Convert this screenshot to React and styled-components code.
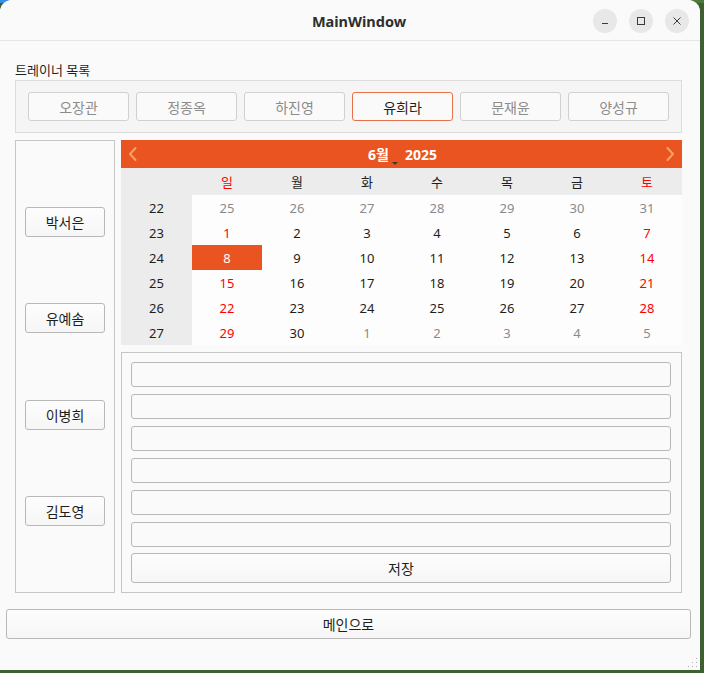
import React, { useState } from 'react';
import styled, { createGlobalStyle } from 'styled-components';

const GlobalStyle = createGlobalStyle`
  html, body {
    margin: 0;
    padding: 0;
    background: linear-gradient(to bottom, #3b8ee6 0px, #3b8ee6 3px, #46743a 3px);
    font-family: "Noto Sans", "Noto Sans CJK KR", sans-serif;
    overflow: hidden;
  }
  * { box-sizing: border-box; }
`;

const Desktop = styled.div`
  width: 704px;
  height: 673px;
  background: linear-gradient(to right, #3b8ee6 0%, #3b8ee6 82%, #4d7a3c 92%);
  background-size: 100% 3px;
  background-repeat: no-repeat;
  background-color: #3d5f31;
`;

const Window = styled.div`
  position: relative;
  width: 700px;
  height: 670px;
  background: #fafafa;
  border-radius: 12px 12px 0 0;
  display: flex;
  flex-direction: column;
  overflow: hidden;
`;

const TitleBar = styled.div`
  height: 41px;
  flex: none;
  display: flex;
  align-items: center;
  justify-content: center;
  position: relative;
  padding: 2px 0 0 18px;
  border-bottom: 1px solid #e6e6e6;
  background: #fafafa;
`;

const Title = styled.div`
  font-family: "Noto Sans", "DejaVu Sans", sans-serif;
  font-weight: 700;
  font-size: 14.5px;
  color: #2e2e2e;
`;

const WinButtons = styled.div`
  position: absolute;
  right: 11px;
  top: 9px;
  display: flex;
  gap: 12px;
`;

const WinButton = styled.div`
  width: 24px;
  height: 24px;
  border-radius: 50%;
  background: #e8e8e8;
  display: flex;
  align-items: center;
  justify-content: center;
`;

const Content = styled.div`
  flex: 1;
  display: flex;
  flex-direction: column;
  padding: 0 9px 0 6px;
`;

const Upper = styled.div`
  padding: 0 9px;
  display: flex;
  flex-direction: column;
`;

const SectionLabel = styled.div`
  font-size: 13px;
  color: #1e1e1e;
  margin-top: 20px;
  height: 19px;
  line-height: 19px;
`;

const GroupBox = styled.div`
  border: 1px solid #dcdcdc;
  background: #f5f5f5;
  height: 53px;
  padding: 11px 12px 0 12px;
  display: flex;
  gap: 7px;
`;

const TrainerButton = styled.button`
  flex: 1;
  height: 29px;
  font-family: "Noto Sans", "Noto Sans CJK KR", sans-serif;
  font-size: 14px;
  color: ${p => (p.$active ? '#1e1e1e' : '#8c8c8c')};
  background: #fafafa;
  border: 1px solid ${p => (p.$active ? '#e9714a' : '#d0d0d0')};
  border-radius: 3px;
  padding: 0;
`;

const MainRow = styled.div`
  margin-top: 7px;
  display: flex;
  gap: 6px;
  height: 453px;
`;

const LeftPanel = styled.div`
  width: 100px;
  border: 1px solid #c6c6c6;
  display: flex;
  flex-direction: column;
  justify-content: space-evenly;
  align-items: center;
`;

const PushButton = styled.button`
  width: ${p => p.$width || '80px'};
  height: ${p => p.$height || '30px'};
  font-family: "Noto Sans", "Noto Sans CJK KR", sans-serif;
  font-size: 14px;
  color: #1e1e1e;
  background: linear-gradient(#fdfdfd, #f6f6f6);
  border: 1px solid #b8b8b8;
  border-radius: 3px;
  padding: 0;
`;

const RightColumn = styled.div`
  flex: 1;
  display: flex;
  flex-direction: column;
  gap: 7px;
`;

const Calendar = styled.div`
  height: 205px;
  display: flex;
  flex-direction: column;
  background: #fdfdfd;
`;

const CalHeader = styled.div`
  height: 28px;
  background: #e95420;
  display: flex;
  align-items: center;
  justify-content: space-between;
  padding: 0 6px 0 6px;
`;

const MonthYear = styled.div`
  display: flex;
  align-items: center;
  gap: 12px;
  color: #ffffff;
  font-weight: 700;
  font-size: 14px;
  margin-left: 2px;
`;

const MonthLabel = styled.span`
  position: relative;
  padding-right: 4px;
`;

const DropArrow = styled.span`
  position: absolute;
  right: -5px;
  bottom: -1px;
  width: 0;
  height: 0;
  border-left: 3px solid transparent;
  border-right: 3px solid transparent;
  border-top: 3px solid #3a3a3a;
`;

const CalGrid = styled.div`
  flex: 1;
  display: grid;
  grid-template-columns: 71px repeat(7, 1fr);
  grid-template-rows: 27px repeat(6, 25px);
  font-size: 13px;
`;

const Cell = styled.div`
  display: flex;
  align-items: center;
  justify-content: center;
  background: ${p => (p.$selected ? '#e95420' : p.$head ? '#ececec' : 'transparent')};
  color: ${p =>
    p.$selected ? '#ffffff' : p.$dim ? '#8a8a8a' : p.$red ? '#ff0000' : '#1e1e1e'};
`;

const FormBox = styled.div`
  flex: 1;
  border: 1px solid #c6c6c6;
  padding: 9px 10px 0 9px;
  display: flex;
  flex-direction: column;
  gap: 7px;
`;

const FieldInput = styled.input`
  height: 25px;
  border: 1px solid #b8b8b8;
  border-radius: 3px;
  background: #fafafa;
  font-family: "Noto Sans", "Noto Sans CJK KR", sans-serif;
  font-size: 13px;
  padding: 0 6px;
  outline: none;
`;

const BottomRow = styled.div`
  margin-top: 16px;
  display: flex;
`;

const Grip = styled.svg`
  position: absolute;
  right: 2px;
  bottom: 2px;
`;

const trainers = ['오장관', '정종옥', '하진영', '유희라', '문재윤', '양성규'];
const members = ['박서은', '유예솜', '이병희', '김도영'];
const dows = ['일', '월', '화', '수', '목', '금', '토'];

const weeks = [
  { no: 22, days: [25, 26, 27, 28, 29, 30, 31], dim: [0, 1, 2, 3, 4, 5, 6] },
  { no: 23, days: [1, 2, 3, 4, 5, 6, 7], dim: [] },
  { no: 24, days: [8, 9, 10, 11, 12, 13, 14], dim: [] },
  { no: 25, days: [15, 16, 17, 18, 19, 20, 21], dim: [] },
  { no: 26, days: [22, 23, 24, 25, 26, 27, 28], dim: [] },
  { no: 27, days: [29, 30, 1, 2, 3, 4, 5], dim: [2, 3, 4, 5, 6] },
];

const Chevron = ({ dir }) => (
  <svg width="12" height="16" viewBox="0 0 12 16">
    <path
      d={dir === 'left' ? 'M8.5 2 L3 8 L8.5 14' : 'M3.5 2 L9 8 L3.5 14'}
      fill="none"
      stroke="#f4a466"
      strokeWidth="2"
      strokeLinecap="round"
      strokeLinejoin="round"
    />
  </svg>
);

function App() {
  const [active, setActive] = useState('유희라');
  const [selectedDay] = useState(8);

  return (
    <Desktop>
      <GlobalStyle />
      <Window>
        <TitleBar>
          <Title>MainWindow</Title>
          <WinButtons>
            <WinButton>
              <svg width="10" height="10" viewBox="0 0 10 10">
                <path d="M2 7.5 H8" stroke="#3a3a3a" strokeWidth="1" />
              </svg>
            </WinButton>
            <WinButton>
              <svg width="10" height="10" viewBox="0 0 10 10">
                <rect x="1.5" y="1.5" width="7" height="7" fill="none" stroke="#3a3a3a" strokeWidth="1" />
              </svg>
            </WinButton>
            <WinButton>
              <svg width="10" height="10" viewBox="0 0 10 10">
                <path d="M1.5 1.5 L8.5 8.5 M8.5 1.5 L1.5 8.5" stroke="#3a3a3a" strokeWidth="1" />
              </svg>
            </WinButton>
          </WinButtons>
        </TitleBar>

        <Content>
          <Upper>
            <SectionLabel>트레이너 목록</SectionLabel>
            <GroupBox>
              {trainers.map(t => (
                <TrainerButton key={t} $active={active === t} onClick={() => setActive(t)}>
                  {t}
                </TrainerButton>
              ))}
            </GroupBox>

            <MainRow>
              <LeftPanel>
                {members.map(m => (
                  <PushButton key={m}>{m}</PushButton>
                ))}
              </LeftPanel>

              <RightColumn>
                <Calendar>
                  <CalHeader>
                    <Chevron dir="left" />
                    <MonthYear>
                      <MonthLabel>
                        6월
                        <DropArrow />
                      </MonthLabel>
                      <span>2025</span>
                    </MonthYear>
                    <Chevron dir="right" />
                  </CalHeader>
                  <CalGrid>
                    <Cell $head />
                    {dows.map((d, i) => (
                      <Cell key={d} $head $red={i === 0 || i === 6}>
                        {d}
                      </Cell>
                    ))}
                    {weeks.map(w => (
                      <React.Fragment key={w.no}>
                        <Cell $head>{w.no}</Cell>
                        {w.days.map((d, i) => (
                          <Cell
                            key={i}
                            $dim={w.dim.includes(i)}
                            $red={i === 0 || i === 6}
                            $selected={!w.dim.includes(i) && d === selectedDay}
                          >
                            {d}
                          </Cell>
                        ))}
                      </React.Fragment>
                    ))}
                  </CalGrid>
                </Calendar>

                <FormBox>
                  {[0, 1, 2, 3, 4, 5].map(i => (
                    <FieldInput key={i} />
                  ))}
                  <PushButton $width="100%" $height="30px" style={{ marginTop: '-1px' }}>
                    저장
                  </PushButton>
                </FormBox>
              </RightColumn>
            </MainRow>
          </Upper>

          <BottomRow>
            <PushButton $width="100%" $height="30px">
              메인으로
            </PushButton>
          </BottomRow>
        </Content>

        <Grip width="12" height="12" viewBox="0 0 12 12">
          {[[10, 2], [10, 6], [6, 6], [10, 10], [6, 10], [2, 10]].map(([x, y]) => (
            <rect key={`${x}-${y}`} x={x} y={y} width="1" height="1" fill="#b0b0b0" />
          ))}
        </Grip>
      </Window>
    </Desktop>
  );
}

export default App;
